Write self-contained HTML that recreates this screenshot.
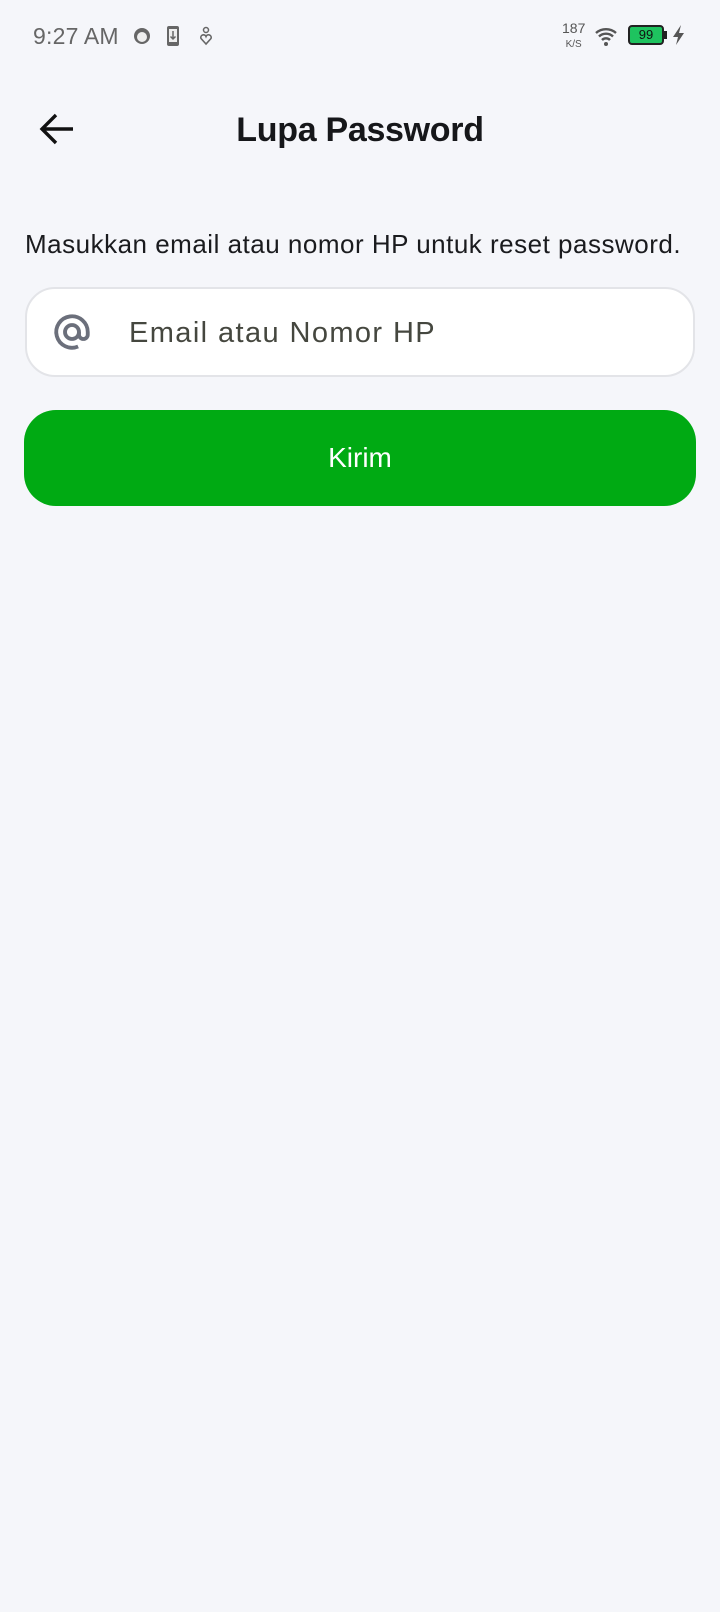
<!DOCTYPE html>
<html><head><meta charset="utf-8"><style>
html,body{margin:0;padding:0}
body{width:720px;height:1612px;background:#f5f6fa;font-family:"Liberation Sans",sans-serif;position:relative;overflow:hidden}
.abs{position:absolute}
</style></head><body>
<!-- status bar -->
<div class="abs" style="left:33px;top:23px;font-size:23px;color:#666;letter-spacing:0.2px">9:27 AM</div>
<svg class="abs" style="left:132px;top:26px" width="20" height="20" viewBox="0 0 20 20"><circle cx="10" cy="10" r="8" fill="#666"/><circle cx="10" cy="11" r="5" fill="#eee"/></svg>
<svg class="abs" style="left:166px;top:25px" width="14" height="22" viewBox="0 0 14 22"><rect x="1" y="1" width="12" height="20" rx="2" fill="#666"/><rect x="3" y="4" width="8" height="13" fill="#eee"/><path d="M7 6v8M4.5 11.5L7 14l2.5-2.5" stroke="#666" stroke-width="1.5" fill="none"/></svg>
<svg class="abs" style="left:198px;top:26px" width="16" height="20" viewBox="0 0 16 20"><circle cx="8" cy="4" r="2.5" stroke="#666" stroke-width="1.5" fill="none"/><path d="M8 18L3 12.5a2.5 2.5 0 015-2 2.5 2.5 0 015 2z" stroke="#666" stroke-width="1.6" fill="none"/></svg>
<div class="abs" style="left:562px;top:21px;font-size:14px;color:#555;line-height:14px;text-align:center">187<br><span style="font-size:10px">K/S</span></div>
<svg class="abs" style="left:594px;top:25px" width="26" height="22" viewBox="0 0 26 22"><path d="M2 8a15 15 0 0120 0M5 11.5a10 10 0 0114 0M8 15a5.5 5.5 0 018 0" stroke="#555" stroke-width="2.4" fill="none"/><circle cx="12" cy="19" r="2" fill="#555"/></svg>
<div class="abs" style="left:628px;top:25px;width:36px;height:20px;border:2px solid #222;border-radius:4px;box-sizing:border-box;background:#1ec35f;font-size:13px;text-align:center;line-height:16px;color:#111">99</div>
<div class="abs" style="left:664px;top:31px;width:3px;height:8px;background:#222"></div>
<svg class="abs" style="left:671px;top:24px" width="16" height="22" viewBox="0 0 16 22"><path d="M10 1L2 13h5l-2 8 8-12H8z" fill="#555"/></svg>
<!-- header -->
<svg class="abs" style="left:38px;top:111px" width="38" height="36" viewBox="0 0 38 36"><path d="M35 18H5M18 4L4 18l14 14" stroke="#111" stroke-width="3.4" fill="none"/></svg>
<div class="abs" style="left:0;width:720px;top:111px;text-align:center;font-size:34px;font-weight:bold;color:#16171a;letter-spacing:-0.3px">Lupa Password</div>
<div class="abs" style="left:25px;top:229px;font-size:26px;color:#1a1b1e;letter-spacing:0.5px;white-space:nowrap">Masukkan email atau nomor HP untuk reset password.</div>
<!-- input -->
<div class="abs" style="left:25px;top:287px;width:670px;height:90px;box-sizing:border-box;background:#fff;border:2px solid #e3e4e8;border-radius:30px"></div>
<svg class="abs" style="left:51px;top:311px" width="42" height="42" viewBox="0 0 24 24"><path d="M16 12v1.5a2.5 2.5 0 005 0V12a9 9 0 10-5.5 8.3" stroke="#6b6f7b" stroke-width="2.2" fill="none"/><circle cx="12" cy="12" r="4" stroke="#6b6f7b" stroke-width="2.2" fill="none"/></svg>
<div class="abs" style="left:129px;top:317px;font-size:29px;color:#45473f;letter-spacing:1.4px">Email atau Nomor HP</div>
<!-- button -->
<div class="abs" style="left:24px;top:410px;width:672px;height:96px;background:#00aa13;border-radius:32px;color:#fff;font-size:28px;text-align:center;line-height:96px">Kirim</div>
</body></html>
